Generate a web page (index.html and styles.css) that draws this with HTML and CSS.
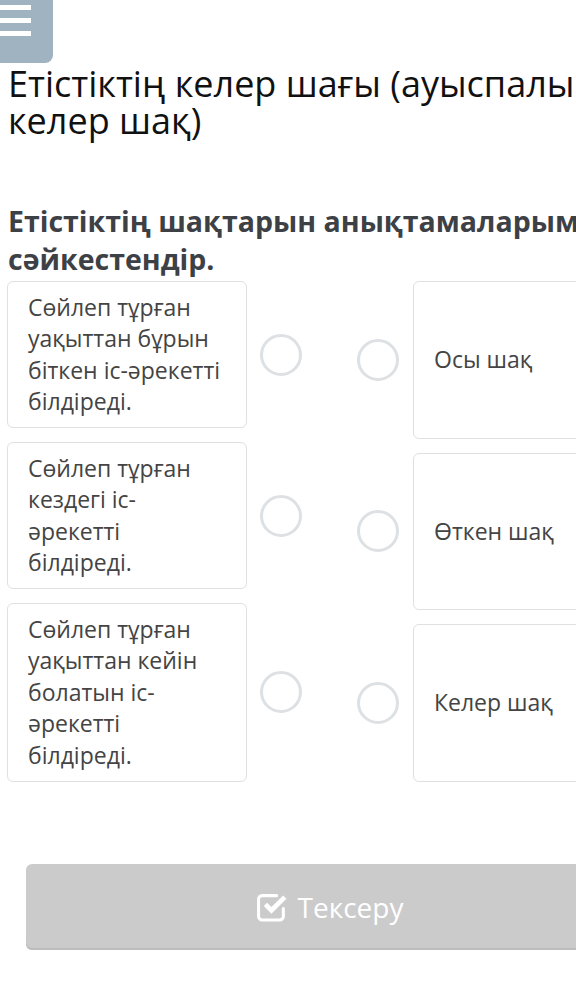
FILE: index.html
```html
<!DOCTYPE html>
<html lang="kk">
<head>
  <meta charset="UTF-8" />
  <meta name="viewport" content="width=device-width, initial-scale=1.0" />
  <title>Етістіктің келер шағы</title>
  <link rel="stylesheet" href="styles.css">
</head>
<body>
  <header class="topbar">
    <button class="menu-btn" aria-label="Мәзір">
      <span></span><span></span><span></span>
    </button>
  </header>

  <main class="page">
    <h1 class="title">Етістіктің келер шағы (ауыспалы келер шақ)</h1>
    <h2 class="task">Етістіктің шақтарын анықтамаларымен сәйкестендір.</h2>

    <div class="match">
      <div class="col col-left">
        <div class="item">
          <div class="card">Сөйлеп тұрған уақыттан бұрын біткен іс-әрекетті білдіреді.</div>
          <span class="dot"></span>
        </div>
        <div class="item">
          <div class="card">Сөйлеп тұрған кездегі іс-әрекетті білдіреді.</div>
          <span class="dot"></span>
        </div>
        <div class="item">
          <div class="card">Сөйлеп тұрған уақыттан кейін болатын іс-әрекетті білдіреді.</div>
          <span class="dot"></span>
        </div>
      </div>

      <div class="col col-right">
        <div class="item">
          <span class="dot"></span>
          <div class="card card-answer">Осы шақ</div>
        </div>
        <div class="item">
          <span class="dot"></span>
          <div class="card card-answer">Өткен шақ</div>
        </div>
        <div class="item">
          <span class="dot"></span>
          <div class="card card-answer">Келер шақ</div>
        </div>
      </div>
    </div>

    <button class="check-btn">
      <svg class="check-icon" viewBox="0 0 30 30" width="31" height="31" aria-hidden="true">
        <path d="M25.5 17v7.5a3.5 3.5 0 0 1-3.5 3.5H5a3.5 3.5 0 0 1-3.5-3.5V8A3.5 3.5 0 0 1 5 4.5h14" fill="none" stroke="#fff" stroke-width="3" stroke-linejoin="round" stroke-linecap="round"/>
        <path d="M6.5 14.5l3.2-3.2 4.3 4.3L25.3 4.3l3.2 3.2L14 22z" fill="#fff"/>
      </svg>
      Тексеру
    </button>
  </main>
</body>
</html>
```

FILE: styles.css
```css
html, body {
  margin: 0;
  padding: 0;
  background: #fff;
  overflow: hidden;
}
body {
  font-family: "Open Sans", "Noto Sans", sans-serif;
  color: #333;
  width: 660px;
}

.topbar {
  height: 63px;
}
.menu-btn {
  width: 53px;
  height: 63px;
  border: 0;
  padding: 5px 0 0 0;
  background: #a0b3c1;
  border-radius: 0 0 8px 0;
  display: flex;
  flex-direction: column;
  gap: 8px;
  align-items: flex-start;
}
.menu-btn span {
  display: block;
  width: 31px;
  height: 5px;
  background: #fff;
}

.page {
  padding: 0 0 0 8px;
}
.title {
  margin: 2px 0 0;
  width: 600px;
  font-size: 36px;
  font-weight: 400;
  line-height: 37px;
  color: #111;
}
.task {
  margin: 63px 0 0;
  font-size: 28.5px;
  font-weight: 700;
  line-height: 38px;
  color: #3d4146;
  width: 650px;
}

.match {
  display: flex;
  margin: 3px 0 0 -1px;
  gap: 55px;
}
.col {
  display: flex;
  flex-direction: column;
  gap: 14px;
}
.col-right {
  flex: 0 0 240px;
}
.item {
  display: flex;
  align-items: center;
  gap: 13px;
}
.col-right .item {
  flex: 1;
  gap: 14px;
}
.card {
  box-sizing: border-box;
  width: 240px;
  border: 1px solid #e0e0e0;
  border-radius: 6px;
  padding: 9.5px 20px;
  font-size: 23px;
  line-height: 31.5px;
  color: #444;
}
.card-answer {
  align-self: stretch;
  display: flex;
  align-items: center;
}
.dot {
  flex: 0 0 auto;
  box-sizing: border-box;
  width: 42px;
  height: 42px;
  border: 3px solid #dde1e4;
  border-radius: 50%;
}

.check-btn {
  margin: 82px 0 0 18px;
  width: 608px;
  height: 86px;
  border: 0;
  border-radius: 6px;
  background: #cbcbcb;
  box-shadow: inset 0 -2px 0 #bdbdbd;
  color: #fff;
  font-family: "Open Sans", sans-serif;
  font-size: 28px;
  display: flex;
  align-items: center;
  justify-content: center;
  gap: 10px;
}
.check-icon {
  display: block;
}
```
